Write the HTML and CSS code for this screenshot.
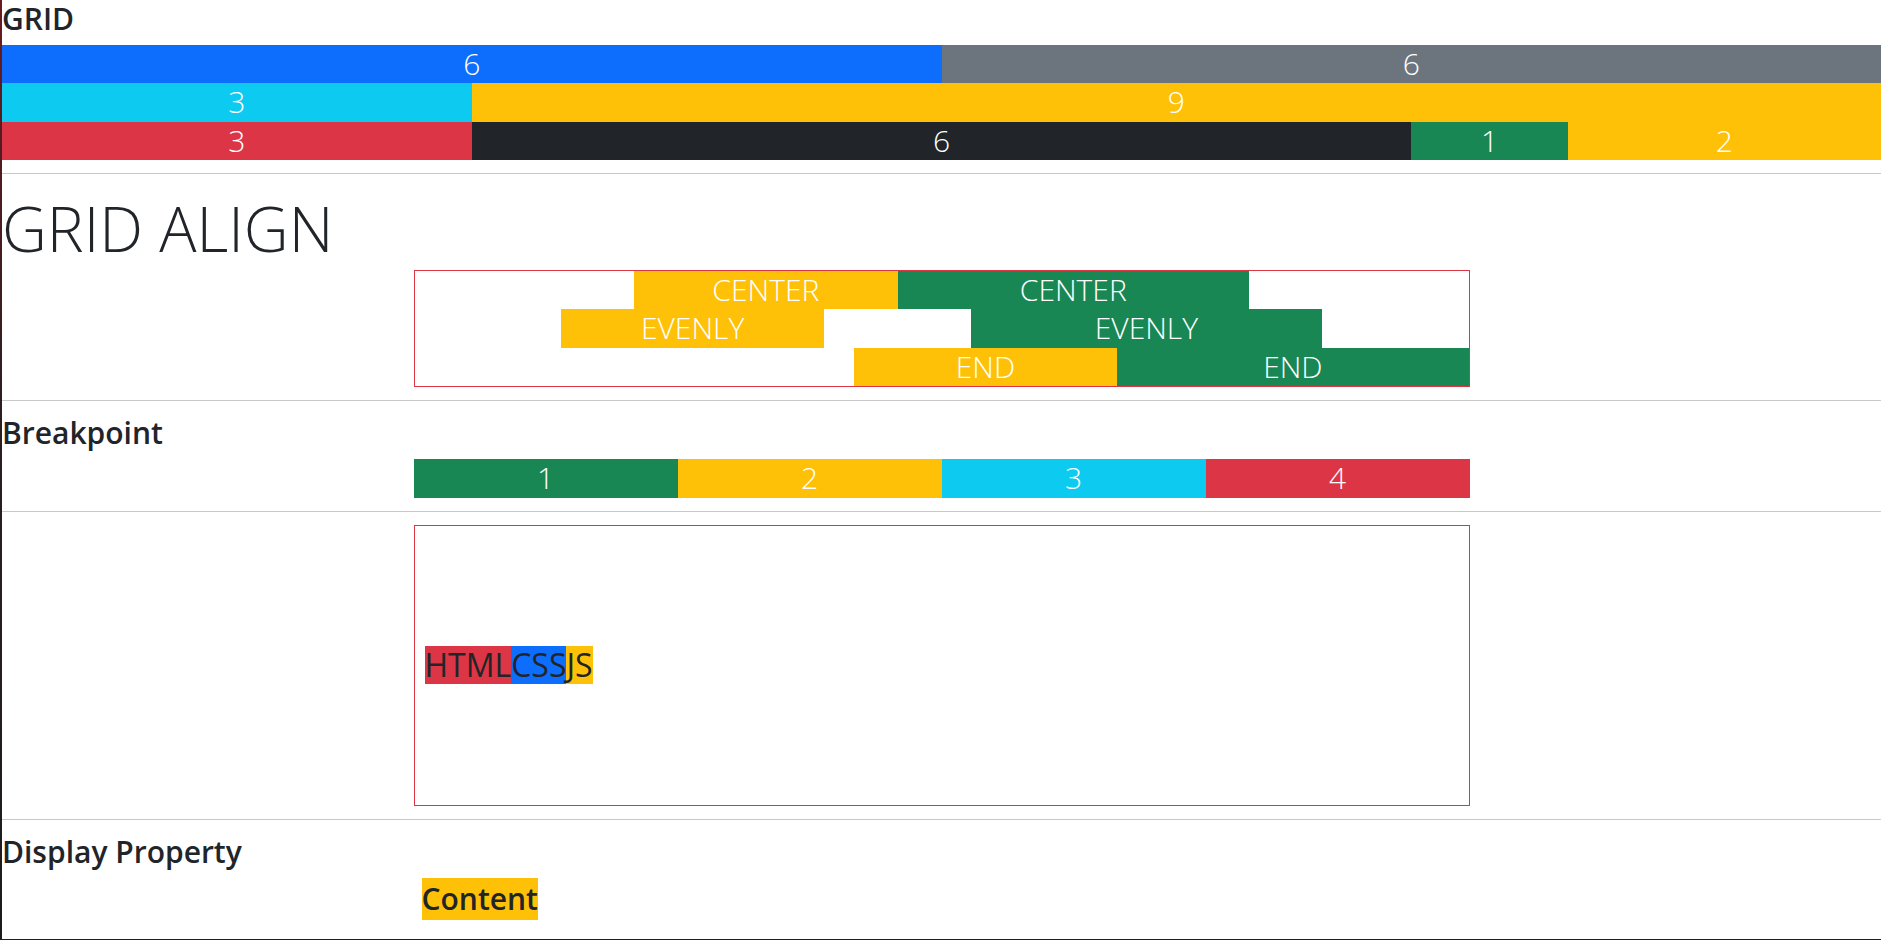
FILE: index.html
```html
<!DOCTYPE html>
<html lang="en">
<head>
<meta charset="utf-8">
<title>Grid</title>
<link rel="stylesheet" href="styles.css">
</head>
<body>
<div class="frame">
  <h2 class="heading">GRID</h2>
  <div class="grid-row">
    <div class="cell c6 bg-primary">6</div>
    <div class="cell c6 bg-secondary">6</div>
  </div>
  <div class="grid-row">
    <div class="cell c3 bg-info">3</div>
    <div class="cell c9 bg-warning">9</div>
  </div>
  <div class="grid-row">
    <div class="cell c3 bg-danger">3</div>
    <div class="cell c6 bg-dark">6</div>
    <div class="cell c1 bg-success">1</div>
    <div class="cell c2 bg-warning">2</div>
  </div>
  <hr class="rule">
  <h1 class="display">GRID ALIGN</h1>
  <div class="align-box">
    <div class="arow j-center">
      <div class="cell a3 bg-warning">CENTER</div>
      <div class="cell a4 bg-success">CENTER</div>
    </div>
    <div class="arow j-evenly">
      <div class="cell a3 bg-warning">EVENLY</div>
      <div class="cell a4 bg-success">EVENLY</div>
    </div>
    <div class="arow j-end">
      <div class="cell a3 bg-warning">END</div>
      <div class="cell a4 bg-success">END</div>
    </div>
  </div>
  <hr class="rule">
  <h2 class="heading">Breakpoint</h2>
  <div class="bp-row">
    <div class="cell bg-success">1</div>
    <div class="cell bg-warning">2</div>
    <div class="cell bg-info">3</div>
    <div class="cell bg-danger">4</div>
  </div>
  <hr class="rule">
  <div class="flex-box">
    <span class="item bg-danger">HTML</span><span class="item bg-primary">CSS</span><span class="item bg-warning">JS</span>
  </div>
  <hr class="rule">
  <h2 class="heading">Display Property</h2>
  <div class="content-wrap">
    <span class="content bg-warning">Content</span>
  </div>
</div>
</body>
</html>
```

FILE: styles.css
```css
html, body {
  margin: 0;
  padding: 0;
  background: #fff;
}

body {
  font-family: "Open Sans", "Noto Sans", sans-serif;
  color: #212529;
}

.frame {
  box-sizing: border-box;
  min-height: 940px;
  padding-left: 2px;
  padding-bottom: 1px;
  background:
    linear-gradient(to bottom, #6a1a21, #2a1e22 45%, #1c1c1c) no-repeat left top / 2px 100%,
    linear-gradient(#1f1f1f, #1f1f1f) no-repeat left bottom / 100% 1px,
    #fff;
}

.heading {
  margin: 0 0 6.6px;
  font-size: 30px;
  line-height: 38.4px;
  font-weight: 600;
  color: #212529;
}

.grid-row {
  display: grid;
  grid-template-columns: repeat(12, 1fr);
}

.cell {
  color: #fff;
  font-size: 30px;
  font-weight: 300;
  line-height: 38.4px;
  text-align: center;
}

.c1 { grid-column: span 1; }
.c2 { grid-column: span 2; }
.c3 { grid-column: span 3; }
.c6 { grid-column: span 6; }
.c9 { grid-column: span 9; }

.bg-primary { background: #0d6efd; }
.bg-secondary { background: #6c757d; }
.bg-info { background: #0dcaf0; }
.bg-warning { background: #ffc107; }
.bg-danger { background: #dc3545; }
.bg-dark { background: #212529; }
.bg-success { background: #198754; }

.rule {
  margin: 13px 0;
  border: 0;
  border-top: 1px solid #c8c9ca;
  height: 0;
}

.display {
  margin: 16.5px 0 4.9px;
  font-size: 62px;
  line-height: 74.4px;
  font-weight: 300;
  color: #212529;
}

.align-box {
  width: 1056px;
  margin: 0 auto;
  box-sizing: border-box;
  border: 1px solid #dc3545;
}

.arow {
  display: flex;
}

.j-center { justify-content: center; }
.j-evenly { justify-content: space-evenly; }
.j-end { justify-content: flex-end; }

.a3 { width: 25%; }
.a4 { width: 33.3333%; }

.bp-row {
  width: 1056px;
  margin: 0 auto;
  display: grid;
  grid-template-columns: repeat(4, 1fr);
}

.flex-box {
  width: 1056px;
  height: 281px;
  margin: 0 auto;
  box-sizing: border-box;
  border: 1px solid #dc3545;
  padding: 0 10px;
  display: flex;
  align-items: center;
}

.item {
  font-size: 32px;
  line-height: 38px;
  font-weight: 500;
  color: #212529;
}

.content-wrap {
  width: 1056px;
  margin: 0 auto;
  box-sizing: border-box;
  padding-left: 8px;
  display: flex;
}

.content {
  font-size: 30px;
  line-height: 38.4px;
  padding: 2px 0;
  font-weight: 600;
  color: #212529;
}
```
